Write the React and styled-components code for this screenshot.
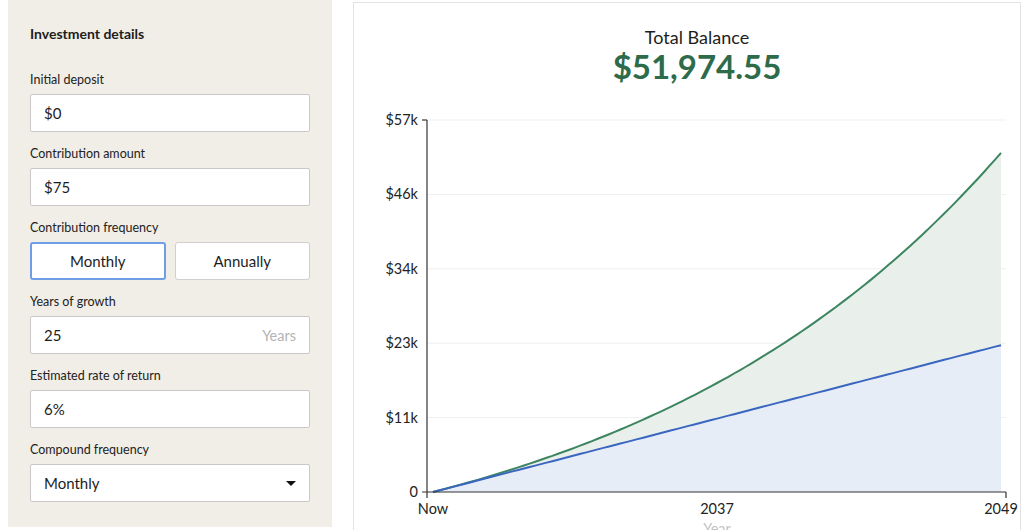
import React from 'react';
import styled, { createGlobalStyle } from 'styled-components';

const GlobalStyle = createGlobalStyle`
    html, body {
        margin: 0;
        padding: 0;
        background: #ffffff;
        font-family: 'Lato', 'Liberation Sans', sans-serif;
        color: #1d1d1d;
        overflow: hidden;
    }
`

const Page = styled.div`
    display: flex;
    align-items: flex-start;
    gap: 21px;
    padding: 0 3px 0 8px;
    height: 530px;
    box-sizing: border-box;
    overflow: hidden;
`

const Sidebar = styled.aside`
    width: 324px;
    height: 527px;
    box-sizing: border-box;
    background-color: #f1ede7;
    padding: 25px 22px 0 22px;
    flex-shrink: 0;
`

const Heading = styled.h2`
    font-size: 14px;
    font-weight: 700;
    margin: 0 0 29px 0;
    line-height: 18px;
`

const Field = styled.div`
    margin-bottom: 14px;
`

const Label = styled.div`
    font-size: 12.5px;
    line-height: 16px;
    margin-bottom: 6px;
    color: #222;
`

const InputBox = styled.div`
    height: 38px;
    box-sizing: border-box;
    background: #fff;
    border: 1px solid #c9c9c9;
    border-radius: 2px;
    display: flex;
    align-items: center;
    justify-content: space-between;
    padding: 0 13px;
    font-size: 15px;
`

const Suffix = styled.span`
    color: #b3b3b3;
    font-size: 14.5px;
`

const Toggle = styled.div`
    display: grid;
    grid-template-columns: 1fr 1fr;
    gap: 9px;
`

const ToggleButton = styled.div`
    height: 38px;
    box-sizing: border-box;
    background: #fff;
    border: ${props => props.active ? '2px solid #6f9de6' : '1px solid #cfcfcf'};
    border-radius: 3px;
    display: flex;
    align-items: center;
    justify-content: center;
    font-size: 15px;
`

const Caret = styled.span`
    width: 0;
    height: 0;
    border-left: 5px solid transparent;
    border-right: 5px solid transparent;
    border-top: 5px solid #111;
`

const Card = styled.section`
    flex: 1;
    margin-top: 2px;
    height: 540px;
    box-sizing: border-box;
    border: 1px solid #e3e3e3;
    display: flex;
    flex-direction: column;
    align-items: center;
    padding-top: 24px;
`

const Title = styled.div`
    font-size: 18px;
    line-height: 20px;
    margin-left: 20px;
`

const Total = styled.div`
    font-size: 33px;
    font-weight: 700;
    color: #2d6b4b;
    line-height: 38px;
    margin-left: 20px;
`

const ChartSvg = styled.svg`
    display: block;
    margin-top: 22px;
    font-family: 'Lato', 'Liberation Sans', sans-serif;
`

// chart geometry (in svg coordinates, svg starts at page x=354, y=106)
const OX = 354
const OY = 106
const x0 = 433 - OX
const x1 = 1001 - OX
const axisL = 427 - OX
const axisR = 1006 - OX
const yTop = 119 - OY
const yBot = 491 - OY
const maxV = 57000

const sx = (m) => x0 + (m / 300) * (x1 - x0)
const sy = (v) => yBot - (v / maxV) * (yBot - yTop)

const buildSeries = () => {
    const r = 0.06 / 12
    const total = []
    const contrib = []
    for (let m = 0; m <= 300; m += 3) {
        const fv = m === 0 ? 0 : 75 * ((Math.pow(1 + r, m) - 1) / r)
        total.push([sx(m), sy(fv)])
        contrib.push([sx(m), sy(75 * m)])
    }
    return { total, contrib }
}

const toPath = (pts) => pts.map((p, i) => `${i ? 'L' : 'M'}${p[0].toFixed(1)},${p[1].toFixed(1)}`).join(' ')

const ticks = [
    { label: '$57k', v: 57000 },
    { label: '$46k', v: 45600 },
    { label: '$34k', v: 34200 },
    { label: '$23k', v: 22800 },
    { label: '$11k', v: 11400 },
]

const Chart = () => {
    const { total, contrib } = buildSeries()
    const totalLine = toPath(total)
    const contribLine = toPath(contrib)
    const totalArea = `${totalLine} L${x1},${yBot} L${x0},${yBot} Z`
    const contribArea = `${contribLine} L${x1},${yBot} L${x0},${yBot} Z`

    return (
        <ChartSvg width="666" height="430" viewBox="0 0 666 430">
            {ticks.map(t => (
                <g key={t.label}>
                    <line x1={axisL} x2={axisR} y1={sy(t.v)} y2={sy(t.v)} stroke="#efefef" strokeWidth="1" />
                    <text x={axisL - 9} y={sy(t.v) + 5} textAnchor="end" fontSize="14.5" fill="#222">{t.label}</text>
                </g>
            ))}
            <text x={axisL - 9} y={yBot + 5} textAnchor="end" fontSize="14.5" fill="#222">0</text>

            <path d={totalArea} fill="#e9efea" />
            <path d={contribArea} fill="#e7edf6" />
            <path d={totalLine} fill="none" stroke="#3c8560" strokeWidth="2" />
            <path d={contribLine} fill="none" stroke="#3a66c2" strokeWidth="2" />

            <line x1={axisL} x2={axisL} y1={yTop} y2={yBot + 6} stroke="#333" strokeWidth="1.2" />
            <line x1={axisL - 5} x2={axisL} y1={yTop} y2={yTop} stroke="#333" strokeWidth="1.2" />
            <line x1={axisL - 5} x2={axisR} y1={yBot} y2={yBot} stroke="#333" strokeWidth="1.2" />
            <line x1={axisR} x2={axisR} y1={yBot} y2={yBot + 6} stroke="#333" strokeWidth="1.2" />

            <text x={x0} y={yBot + 22} textAnchor="middle" fontSize="14.5" fill="#222">Now</text>
            <text x={717 - OX} y={yBot + 22} textAnchor="middle" fontSize="14.5" fill="#222">2037</text>
            <text x={x1} y={yBot + 22} textAnchor="middle" fontSize="14.5" fill="#222">2049</text>
            <text x={717 - OX} y={yBot + 42} textAnchor="middle" fontSize="14.5" fill="#c4c4c4">Year</text>
        </ChartSvg>
    )
}

const App = () => {
    return (
        <>
            <GlobalStyle />
            <Page>
                <Sidebar>
                    <Heading>Investment details</Heading>
                    <Field>
                        <Label>Initial deposit</Label>
                        <InputBox>$0</InputBox>
                    </Field>
                    <Field>
                        <Label>Contribution amount</Label>
                        <InputBox>$75</InputBox>
                    </Field>
                    <Field>
                        <Label>Contribution frequency</Label>
                        <Toggle>
                            <ToggleButton active>Monthly</ToggleButton>
                            <ToggleButton>Annually</ToggleButton>
                        </Toggle>
                    </Field>
                    <Field>
                        <Label>Years of growth</Label>
                        <InputBox>25<Suffix>Years</Suffix></InputBox>
                    </Field>
                    <Field>
                        <Label>Estimated rate of return</Label>
                        <InputBox>6%</InputBox>
                    </Field>
                    <Field>
                        <Label>Compound frequency</Label>
                        <InputBox>Monthly<Caret /></InputBox>
                    </Field>
                </Sidebar>
                <Card>
                    <Title>Total Balance</Title>
                    <Total>$51,974.55</Total>
                    <Chart />
                </Card>
            </Page>
        </>
    );
};

export default App;
